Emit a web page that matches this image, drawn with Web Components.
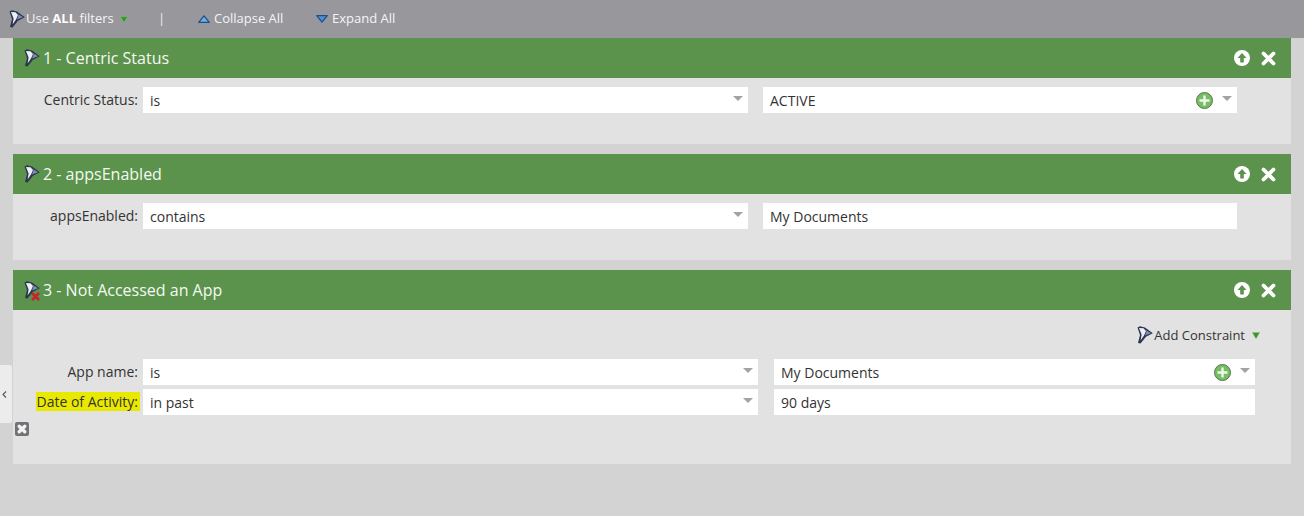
<!DOCTYPE html>
<html>
<head>
<meta charset="utf-8">
<style>
	html, body { margin: 0; height: 100%; }
	body {
		background: #d3d3d3;
		color: #333;
		font: 13px "Open Sans", sans-serif;
		overflow: hidden;
		position: relative;
	}
</style>
</head>
<body>
<filter-toolbar></filter-toolbar>
<side-tab></side-tab>
<filter-list>
	<filter-card heading="1 - Centric Status" height="106">
		<field-row label="Centric Status:" op="is" value="ACTIVE" add></field-row>
	</filter-card>
	<filter-card heading="2 - appsEnabled" height="106">
		<field-row label="appsEnabled:" op="contains" value="My Documents"></field-row>
	</filter-card>
	<filter-card heading="3 - Not Accessed an App" height="194" warn>
		<add-constraint></add-constraint>
		<field-row wide label="App name:" op="is" value="My Documents" add></field-row>
		<field-row wide highlight label="Date of Activity:" op="in past" value="90 days"></field-row>
		<remove-box></remove-box>
	</filter-card>
</filter-list>

<script>
const funnel = (warn) => `
	<svg width="16" height="18" viewBox="0 0 16 18" style="display:block;flex:none;overflow:visible">
		<path d="M0.500 1.500 L3 0.300 L8 1.500 L15.800 7.200 L9 10.800 L3.500 17.500 L1 17 L3 9 Z" fill="#2b3550"/>
		<path d="M2 2 L6.500 2.300 L9 5 L7 9.500 L3.600 14.500 L4.600 8.500 Z" fill="#eceff4"/>
		<path d="M7 2.800 L14 7.200 L8 9.600 L9.600 5 Z" fill="#7f8dab"/>
		${warn ? '<path d="M8 12 L15 19 M15 12 L8 19" stroke="#c9222c" stroke-width="2.600" fill="none"/>' : ''}
	</svg>`;

const greenArrow = `
	<svg width="8" height="7" viewBox="0 0 8 7" style="display:block;flex:none">
		<path d="M0.300 0.600 H7.700 L4 6.800 Z" fill="#3f9132" stroke="#86c977" stroke-width="0.500"/>
	</svg>`;

class FilterToolbar extends HTMLElement
{
	constructor() {
		super();
		this.attachShadow({mode: 'open'}).innerHTML = `
			<style>
				:host {
					display: flex;
					align-items: center;
					height: 38px;
					box-sizing: border-box;
					padding-left: 9px;
					background: #98979c;
					color: #f4f4f4;
					font-size: 13px;
				}
				.item { display: flex; align-items: center; }
				.item span, .bar { position: relative; top: -1px; }
				b { font-weight: 700; color: #fff; }
				.use { width: 149px; }
				.use span { margin: 0 6px 0 1px; }
				.bar { width: 40px; color: #eee; }
				.act { gap: 4px; }
				.collapse { width: 118px; }
			</style>
			<div class="item use">${funnel()}<span>Use <b>ALL</b> filters</span>${greenArrow}</div>
			<div class="bar">|</div>
			<div class="item act collapse">
				<svg width="12" height="8" viewBox="0 0 12 8"><path d="M0.700 7.300 L6 0.800 L11.300 7.300 Z" fill="#6fb0e6" stroke="#1d4f86" stroke-width="1.200" stroke-linejoin="round"/></svg>
				<span>Collapse All</span>
			</div>
			<div class="item act">
				<svg width="12" height="8" viewBox="0 0 12 8"><path d="M0.700 0.700 L6 7.200 L11.300 0.700 Z" fill="#4d8fd6" stroke="#1d4f86" stroke-width="1.200" stroke-linejoin="round"/></svg>
				<span>Expand All</span>
			</div>
		`;
	}
}

class SideTab extends HTMLElement
{
	constructor() {
		super();
		this.attachShadow({mode: 'open'}).innerHTML = `
			<style>
				:host {
					position: absolute;
					left: 0;
					top: 365px;
					width: 12px;
					height: 58px;
					background: #ececec;
					border-radius: 0 2px 2px 0;
					display: flex;
					align-items: center;
					justify-content: center;
				}
			</style>
			<svg width="5" height="7" viewBox="0 0 5 7" style="margin-left:-3px"><path d="M4 0.500 L1 3.500 L4 6.500" fill="none" stroke="#555" stroke-width="1.100"/></svg>
		`;
	}
}

class FilterList extends HTMLElement
{
	constructor() {
		super();
		this.attachShadow({mode: 'open'}).innerHTML = `
			<style>
				:host {
					display: flex;
					flex-direction: column;
					gap: 10px;
					margin: 0 13px;
				}
			</style>
			<slot></slot>
		`;
	}
}

class FilterCard extends HTMLElement
{
	constructor() {
		super();
		let warn = this.hasAttribute('warn');
		this.attachShadow({mode: 'open'}).innerHTML = `
			<style>
				:host {
					display: block;
					background: #e2e2e2;
					height: ${this.getAttribute('height')}px;
				}
				header {
					display: flex;
					align-items: center;
					height: 40px;
					background: #5b934c;
					color: #fff;
					font-size: 16px;
					padding-left: 11px;
				}
				h2 { flex: 1; margin: 0 0 0 3px; font: inherit; color: #f5f9f3; }
				.tools { display: flex; align-items: center; gap: 11px; margin-right: 15px; }
				svg { display: block; }
				.body { display: block; padding-top: 9px; }
			</style>
			<header>
				${funnel(warn)}
				<h2>${this.getAttribute('heading')}</h2>
				<div class="tools">
					<svg width="16" height="16" viewBox="0 0 16 16">
						<circle cx="8" cy="8" r="8" fill="#fff"/>
						<path d="M8 3 L12.500 8 H9.800 V12.500 H6.200 V8 H3.500 Z" fill="#5b934c"/>
					</svg>
					<svg width="15" height="15" viewBox="0 0 15 15">
						<path d="M2.500 2.500 L12.500 12.500 M12.500 2.500 L2.500 12.500" stroke="#fff" stroke-width="3.800" stroke-linecap="round"/>
					</svg>
				</div>
			</header>
			<div class="body"><slot></slot></div>
		`;
	}
}

class FieldRow extends HTMLElement
{
	constructor() {
		super();
		let wide = this.hasAttribute('wide');
		let hl = this.hasAttribute('highlight');
		let add = this.hasAttribute('add');
		let opWidth = wide ? 615 : 605;
		let valWidth = wide ? 481 : 474;
		let gap = wide ? 16 : 15;
		this.attachShadow({mode: 'open'}).innerHTML = `
			<style>
				:host {
					display: flex;
					height: 26px;
					margin-bottom: 4px;
					align-items: center;
					font-size: 14px;
				}
				label {
					width: 125px;
					text-align: right;
					margin-right: 5px;
					white-space: nowrap;
					color: #333;
					line-height: 18px;
				}
				.hl { background: #e9e900; margin-right: -2px; padding: 0 2px 0 1px; }
				.box {
					display: flex;
					align-items: center;
					height: 26px;
					background: #fff;
					box-sizing: border-box;
					padding: 0 5px 0 7px;
					color: #333;
				}
				.op { width: ${opWidth}px; margin-right: ${gap}px; }
				.val { width: ${valWidth}px; }
				.text { flex: 1; }
				.caret { width: 0; height: 0; border: 5px solid transparent; border-top: 5px solid #a3a3a3; border-bottom: 0; margin-top: -3px; }
				svg { display: block; margin-right: 9px; }
			</style>
			<label><span class="${hl ? 'hl' : ''}">${this.getAttribute('label')}</span></label>
			<div class="box op"><span class="text">${this.getAttribute('op')}</span><i class="caret"></i></div>
			<div class="box val">
				<span class="text">${this.getAttribute('value')}</span>
				${add ? `<svg width="17" height="17" viewBox="0 0 17 17">
					<circle cx="8.500" cy="8.500" r="8" fill="#74c060" stroke="#5f6f5a" stroke-width="1"/>
					<path d="M8.500 3.500 V13.500 M3.500 8.500 H13.500" stroke="#eef8ea" stroke-width="2.400"/>
				</svg><i class="caret"></i>` : ''}
			</div>
		`;
	}
}

class AddConstraint extends HTMLElement
{
	constructor() {
		super();
		this.attachShadow({mode: 'open'}).innerHTML = `
			<style>
				:host {
					display: flex;
					align-items: center;
					justify-content: flex-end;
					height: 32px;
					margin-bottom: 8px;
					padding-right: 31px;
				}
				span { margin: 0 7px 0 1px; color: #333; }
			</style>
			${funnel()}<span>Add Constraint</span>${greenArrow}
		`;
	}
}

class RemoveBox extends HTMLElement
{
	constructor() {
		super();
		this.attachShadow({mode: 'open'}).innerHTML = `
			<style>
				:host { display: block; width: 14px; height: 14px; margin: 7px 0 0 2px; }
				svg { display: block; }
			</style>
			<svg width="14" height="14" viewBox="0 0 14 14">
				<rect width="14" height="14" rx="2" fill="#727276"/>
				<path d="M4.200 4.200 L9.800 9.800 M9.800 4.200 L4.200 9.800" stroke="#f2f2f2" stroke-width="3.400" stroke-linecap="round"/>
			</svg>
		`;
	}
}

customElements.define('filter-toolbar', FilterToolbar);
customElements.define('side-tab', SideTab);
customElements.define('filter-list', FilterList);
customElements.define('filter-card', FilterCard);
customElements.define('field-row', FieldRow);
customElements.define('add-constraint', AddConstraint);
customElements.define('remove-box', RemoveBox);
</script>
</body>
</html>
